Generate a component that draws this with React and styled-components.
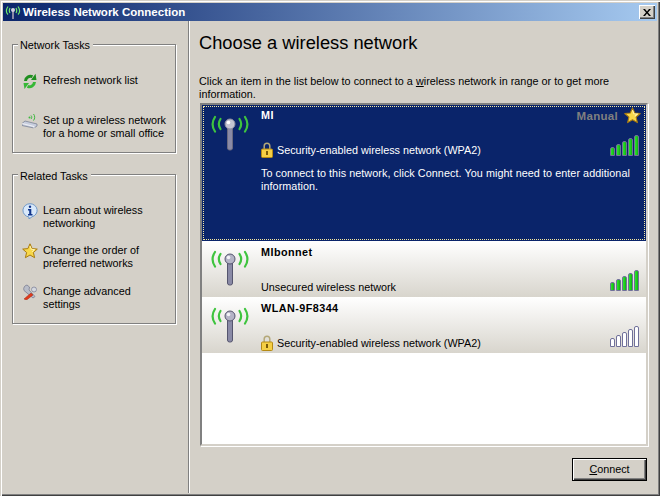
import React from "react";
import styled, { createGlobalStyle, css } from "styled-components";

const Global = createGlobalStyle`
  * { box-sizing: border-box; }
  html, body { margin: 0; padding: 0; background: #d4d0c8; }
  body { font-family: "Liberation Sans", "Noto Sans", sans-serif; font-size: 10.8px; color: #000; }
`;

const Frame = styled.div`
  width: 660px; height: 496px; background: #d4d0c8; padding: 3px;
  display: flex; flex-direction: column;
  box-shadow: inset 1px 1px 0 #d4d0c8, inset 2px 2px 0 #fff, inset -1px -1px 0 #404040, inset -2px -2px 0 #808080;
`;
const TitleBar = styled.div`
  height: 18px; flex: none; display: flex; align-items: center; padding: 0 2px;
  background: linear-gradient(90deg, #0a246a, #a6caf0);
  color: #fff; font-weight: 700; font-size: 11.5px;
`;
const TitleText = styled.span`
  margin-left: 2px; flex: 1; white-space: nowrap;
`;
const CloseBtn = styled.div`
  width: 16px; height: 14px; background: #d4d0c8; display: flex; align-items: center; justify-content: center;
  box-shadow: inset 1px 1px 0 #fff, inset -1px -1px 0 #404040, inset -2px -2px 0 #808080;
`;
const Body = styled.div`
  flex: 1; display: flex; min-height: 0;
`;
const Sidebar = styled.aside`
  width: 186px; flex: none; padding: 23px 9px 0; display: flex; flex-direction: column; gap: 21px;
  border-right: 1px solid #808080; box-shadow: 1px 0 0 #fff;
`;
const Group = styled.section`
  padding: 0 8px; width: 164px; height: ${p => p.$h}px;
  border: 1px solid #808080; box-shadow: 1px 1px 0 #fff, inset 1px 1px 0 #fff;
  display: flex; flex-direction: column; position: relative;
`;
const GroupLegend = styled.div`
  position: absolute; top: ${p => p.$top}px; left: 5px; padding: 0 3px 0 2px; background: #d4d0c8; line-height: 13px;
`;
const TaskList = styled.div`
  display: flex; flex-direction: column; padding-top: 29px; gap: ${p => p.$gap}px;
`;
const Task = styled.div`
  display: flex; align-items: flex-start; gap: 5px; line-height: 13px; white-space: nowrap;
  svg { flex: none; width: 16px; height: 16px; margin: -1px 0 0 1px; }
`;
const Main = styled.main`
  flex: 1; padding: 10px 9px 0 10px; display: flex; flex-direction: column; min-width: 0;
`;
const Heading = styled.h1`
  margin: 0; font-size: 18.3px; font-weight: 400; line-height: 24px;
`;
const Intro = styled.p`
  margin: 20px 0 0; line-height: 13px; width: 440px; letter-spacing: .03px;
  u { text-decoration: underline; }
`;
const ListBox = styled.div`
  margin: 2px 0 0 1px; height: 343px; width: 448px; background: #fff; flex: none; overflow: hidden;
  border: 2px solid; border-color: #808080 #d4d0c8 #d4d0c8 #808080; box-shadow: 1px 1px 0 #fff;
`;
const rowSel = css`
  background: #0a246a; color: #fff; outline: 1px dotted #f5e8a0; outline-offset: -2px;
`;
const rowPlain = css`
  background: linear-gradient(180deg, #fff, #d8d5cd);
`;
const Row = styled.div`
  height: ${p => p.$h}px; position: relative; display: grid; grid-template-columns: 59px 1fr 46px;
  ${p => (p.$sel ? rowSel : rowPlain)}
`;
const Aerial = styled.div`
  padding: ${p => p.$top}px 0 0 8px;
  svg { width: 40px; height: 42px; display: block; }
`;
const Info = styled.div`
  padding-top: ${p => p.$top}px; display: flex; flex-direction: column; min-width: 0;
`;
const Name = styled.div`
  font-weight: 700; line-height: 13px; height: 13px; white-space: nowrap; letter-spacing: .45px;
`;
const Status = styled.div`
  display: flex; align-items: center; gap: 4px; line-height: 13px; height: 16px; margin-top: ${p => p.$mt}px; white-space: nowrap;
  svg { width: 12px; height: 16px; flex: none; }
`;
const Desc = styled.div`
  line-height: 13px; margin-top: 9px; width: 375px; letter-spacing: .06px;
`;
const ManualTag = styled.div`
  position: absolute; top: 2px; right: 5px; display: flex; align-items: center; gap: 6px; color: #808080; font-weight: 700; font-size: 11.5px; letter-spacing: .3px;
  svg { width: 17px; height: 17px; }
`;
const Bars = styled.div`
  position: absolute; right: 7px; bottom: ${p => p.$b}px; display: flex; align-items: flex-end; gap: 1px;
`;
const Bar = styled.div`
  width: 5px; height: ${p => p.$h}px; border: 1px solid #70709a; border-radius: 2px 2px 0 0;
  background: ${p => (p.$on ? "linear-gradient(90deg,#2ee82e,#12b012)" : "#fff")};
`;
const Footer = styled.div`
  height: 46px; display: flex; justify-content: flex-end; align-items: flex-start; padding-top: 12px; padding-right: 1px;
`;
const ConnectBtn = styled.button`
  width: 75px; height: 23px; padding: 0 0 2px; font: inherit; background: #d4d0c8; color: #000; border: 1px solid #000;
  box-shadow: inset 1px 1px 0 #fff, inset -1px -1px 0 #404040, inset -2px -2px 0 #808080;
  u { text-decoration: underline; }
`;

const AerialIcon = ({ dark }) => (
  <svg viewBox="0 0 40 42">
    <g fill="none" stroke="#3fc43f" strokeWidth="2.200" strokeLinecap="round">
      <path d="M10.500 10c-2 3-2 7 0 10" />
      <path d="M5 8c-3 4.500-3 10 0 14.500" />
      <path d="M29.500 10c2 3 2 7 0 10" />
      <path d="M35 8c3 4.500 3 10 0 14.500" />
    </g>
    <rect x="17.500" y="17" width="5" height="24" rx="2" fill="#8a8aa6" stroke={dark ? "#6a6a80" : "#55556e"} />
    <circle cx="20" cy="15" r="5" fill={dark ? "#c4c4d2" : "#b4b4c6"} stroke={dark ? "#8a8a9e" : "#55556e"} />
    <circle cx="18.500" cy="13.500" r="1.800" fill={dark ? "#fff" : "#f2f2f6"} />
  </svg>
);
const LockIcon = () => (
  <svg viewBox="0 0 12 16">
    <path d="M3.200 8V4a2.800 2.800 0 0 1 5.600 0v4" fill="none" stroke="#b4a878" strokeWidth="1.500" />
    <rect x="0.500" y="7" width="11" height="8.500" rx="1" fill="#f5cf45" stroke="#b58a14" />
    <rect x="5" y="9" width="2" height="4" fill="#7a5a08" />
  </svg>
);
const StarIcon = () => (
  <svg viewBox="0 0 16 16">
    <path d="M8 .8l2.100 4.800 5.200.5-3.900 3.400 1.200 5.200L8 12l-4.600 2.700 1.200-5.200L.7 6.100l5.200-.5z" fill="#f8d84a" stroke="#a87a10" strokeWidth="1" strokeLinejoin="round" />
    <path d="M8 3l1.300 3.300 3.300.3-2.500 2.200" fill="none" stroke="#fff3b0" />
  </svg>
);
const RefreshIcon = () => (
  <svg viewBox="0 0 16 16">
    <path d="M3.500 8A5 5 0 0 1 10.500 3.700" fill="none" stroke="#1f8f1f" strokeWidth="3" />
    <path d="M9 7h5.500L13.500 .8z" fill="#1f8f1f" />
    <path d="M12.500 9A5 5 0 0 1 5.500 13.300" fill="none" stroke="#36b836" strokeWidth="3" />
    <path d="M7 10H1.500L2.500 16z" fill="#36b836" />
  </svg>
);
const RouterIcon = () => (
  <svg viewBox="0 0 16 16">
    <path d="M0 10.500l3-2.500 12 3v2l-3 2L0 12.500z" fill="#c8cede" stroke="#70788e" strokeWidth=".7" />
    <path d="M0 10.500l12 3v2" fill="none" stroke="#fff" strokeWidth=".7" />
    <g fill="none" stroke="#3fb83f">
      <path d="M9 2.500c1 1 1 2.500 0 3.500" />
      <path d="M11.500 1c1.600 1.800 1.600 4.700 0 6.500" />
    </g>
    <circle cx="7.500" cy="4.500" r="1" fill="#3fb83f" />
  </svg>
);
const InfoIcon = () => (
  <svg viewBox="0 0 16 16">
    <path d="M8 .7a7.300 6.700 0 0 1 2 13.100L7 16v-2A7.300 6.700 0 0 1 8 .7z" fill="#d8e8fa" stroke="#6f98c8" />
    <circle cx="8" cy="3.800" r="1.200" fill="#12368c" />
    <path d="M6 6h3.300v5H10.500v1.400H6V11h1.200V7.400H6z" fill="#12368c" />
  </svg>
);
const ToolsIcon = () => (
  <svg viewBox="0 0 16 16">
    <path d="M5 1a4 4 0 0 0-3 5.500L5 9l6 5 2-1.500L7 6l.5-3z" fill="#b8bcc8" stroke="#70748a" strokeWidth=".7" />
    <path d="M12 8a2.500 2.500 0 1 0 0-5 2.500 2.500 0 0 0 0 5z" fill="#d4d8e0" stroke="#80849a" strokeWidth=".8" />
    <path d="M2 15l7-6 2 2-6.500 5z" fill="#e03a1c" stroke="#a02410" strokeWidth=".5" />
  </svg>
);
const BarsSet = ({ on, b }) => (
  <Bars $b={b}>
    {[9, 12, 15, 18, 21].map(h => <Bar key={h} $h={h} $on={on} />)}
  </Bars>
);

export default function App() {
  return (
    <>
      <Global />
      <Frame>
        <TitleBar>
          <svg width="16" height="14" viewBox="0 0 16 14">
            <g fill="none" stroke="#6de86d" strokeWidth="1.200">
              <path d="M3 1.500c-2 3-2 6 0 8M5 3c-1 2-1 3.500 0 5M13 1.500c2 3 2 6 0 8M11 3c1 2 1 3.500 0 5" />
            </g>
            <rect x="7" y="5" width="2" height="9" fill="#8a8aa6" />
            <circle cx="8" cy="5" r="2" fill="#d0d0e0" />
          </svg>
          <TitleText>Wireless Network Connection</TitleText>
          <CloseBtn>
            <svg width="8" height="7" viewBox="0 0 8 7"><path d="M0 0l3 3.500L0 7h2l2-2.400L6 7h2L5 3.500 8 0H6L4 2.400 2 0z" /></svg>
          </CloseBtn>
        </TitleBar>
        <Body>
          <Sidebar>
            <Group $h={109}>
              <GroupLegend $top={-6}>Network Tasks</GroupLegend>
              <TaskList $gap={25}>
                <Task><RefreshIcon /><span>Refresh network list</span></Task>
                <Task><RouterIcon /><span>Set up a wireless network<br />for a home or small office</span></Task>
              </TaskList>
            </Group>
            <Group $h={150}>
              <GroupLegend $top={-5}>Related Tasks</GroupLegend>
              <TaskList $gap={14.4}>
                <Task><InfoIcon /><span>Learn about wireless<br />networking</span></Task>
                <Task><StarIcon /><span>Change the order of<br />preferred networks</span></Task>
                <Task><ToolsIcon /><span>Change advanced<br />settings</span></Task>
              </TaskList>
            </Group>
          </Sidebar>
          <Main>
            <Heading>Choose a wireless network</Heading>
            <Intro>Click an item in the list below to connect to a <u>w</u>ireless network in range or to get more information.</Intro>
            <ListBox>
              <Row $h={136} $sel>
                <Aerial $top={4}><AerialIcon dark /></Aerial>
                <Info $top={4}>
                  <Name>MI</Name>
                  <Status $mt={20}><LockIcon />Security-enabled wireless network (WPA2)</Status>
                  <Desc>To connect to this network, click Connect. You might need to enter additional information.</Desc>
                </Info>
                <ManualTag>Manual<StarIcon /></ManualTag>
                <BarsSet on b={85} />
              </Row>
              <Row $h={56}>
                <Aerial $top={3}><AerialIcon /></Aerial>
                <Info $top={5}>
                  <Name>MIbonnet</Name>
                  <Status $mt={20}>Unsecured wireless network</Status>
                </Info>
                <BarsSet on b={6} />
              </Row>
              <Row $h={56}>
                <Aerial $top={4}><AerialIcon /></Aerial>
                <Info $top={5}>
                  <Name>WLAN-9F8344</Name>
                  <Status $mt={20}><LockIcon />Security-enabled wireless network (WPA2)</Status>
                </Info>
                <BarsSet b={6} />
              </Row>
            </ListBox>
            <Footer>
              <ConnectBtn><u>C</u>onnect</ConnectBtn>
            </Footer>
          </Main>
        </Body>
      </Frame>
    </>
  );
}
